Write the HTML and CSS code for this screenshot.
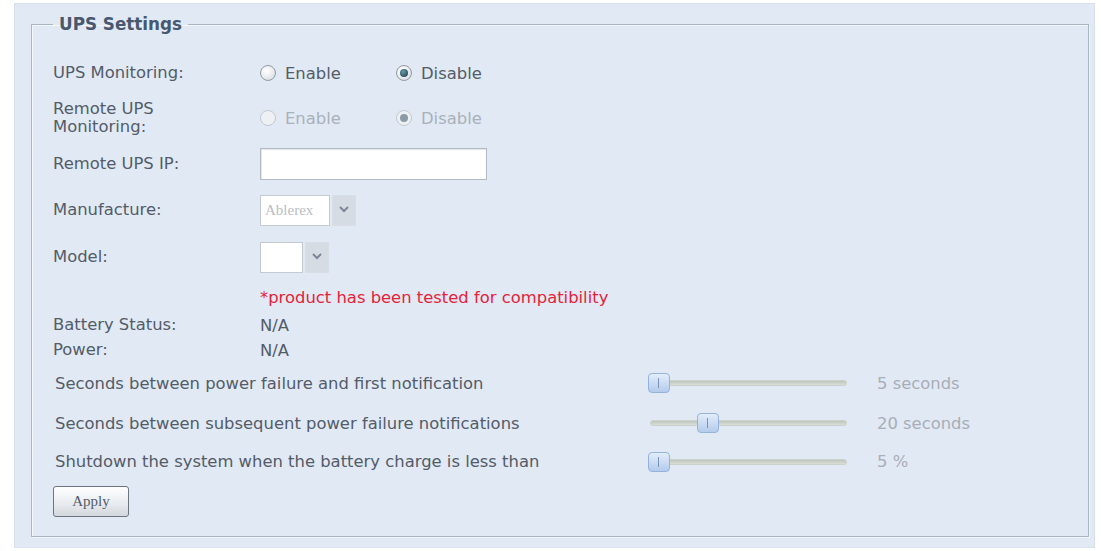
FILE: index.html
```html
<!DOCTYPE html>
<html>
<head>
<meta charset="utf-8">
<link rel="stylesheet" href="styles.css">
</head>
<body>
<div class="panel">
  <fieldset class="box">
    <legend class="legend">UPS Settings</legend>
    <div class="row r1">
      <div class="label">UPS Monitoring:</div>
      <div class="options">
        <span class="opt"><span class="radio"></span>Enable</span>
        <span class="opt"><span class="radio on"></span>Disable</span>
      </div>
    </div>
    <div class="row r2">
      <div class="label">Remote UPS<br>Monitoring:</div>
      <div class="options dis">
        <span class="opt"><span class="radio"></span>Enable</span>
        <span class="opt"><span class="radio on"></span>Disable</span>
      </div>
    </div>
    <div class="row r3">
      <div class="label">Remote UPS IP:</div>
      <div><div class="input"></div></div>
    </div>
    <div class="row r4">
      <div class="label">Manufacture:</div>
      <div class="select">
        <span class="sel-text w70">Ablerex</span>
        <span class="sel-btn"><svg width="12" height="8" viewBox="0 0 12 8"><path d="M2 2 L6 6 L10 2" fill="none" stroke="#7d8796" stroke-width="2"/></svg></span>
      </div>
    </div>
    <div class="row r5">
      <div class="label">Model:</div>
      <div class="select">
        <span class="sel-text w43"></span>
        <span class="sel-btn"><svg width="12" height="8" viewBox="0 0 12 8"><path d="M2 2 L6 6 L10 2" fill="none" stroke="#7d8796" stroke-width="2"/></svg></span>
      </div>
    </div>
    <div class="row r6">
      <div class="label"></div>
      <div class="note">*product has been tested for compatibility</div>
    </div>
    <div class="row r7">
      <div class="label">Battery Status:</div>
      <div class="value">N/A</div>
    </div>
    <div class="row r8">
      <div class="label">Power:</div>
      <div class="value">N/A</div>
    </div>
    <div class="srow s1">
      <div class="slabel">Seconds between power failure and first notification</div>
      <div class="slider"><span class="track"></span><span class="thumb" style="left:0px"></span></div>
      <div class="sval">5 seconds</div>
    </div>
    <div class="srow s2">
      <div class="slabel">Seconds between subsequent power failure notifications</div>
      <div class="slider"><span class="track"></span><span class="thumb" style="left:49px"></span></div>
      <div class="sval">20 seconds</div>
    </div>
    <div class="srow s3">
      <div class="slabel">Shutdown the system when the battery charge is less than</div>
      <div class="slider"><span class="track"></span><span class="thumb" style="left:0px"></span></div>
      <div class="sval">5 %</div>
    </div>
    <div class="actions">
      <button class="btn">Apply</button>
    </div>
  </fieldset>
</div>
</body>
</html>
```

FILE: styles.css
```css
html, body {
  margin: 0;
  padding: 0;
  background: #ffffff;
}
body {
  font-family: "DejaVu Sans", Verdana, sans-serif;
  font-size: 16.4px;
  color: #535c68;
}
.panel {
  margin: 3px 6px 0 14px;
  height: 545px;
  box-sizing: border-box;
  background: #e1e9f4;
  border: 1px solid #d7e0eb;
  padding: 7px 5px 0 16px;
}
.box {
  margin: 0;
  height: 526px;
  box-sizing: border-box;
  border: 1px solid #a9b6c6;
  box-shadow: inset 1px 1px 0 #f3f6fa, 1px 1px 0 #f3f6fa;
  padding: 14px 20px 0 21px;
}
.legend {
  font-weight: bold;
  font-size: 16.8px;
  line-height: 26px;
  color: #48586e;
  padding: 0 6px;
  margin-left: 0;
}
.row {
  display: grid;
  grid-template-columns: 207px 1fr;
  align-items: center;
}
.r1 { height: 44px; }
.r2 { height: 46px; }
.r3 { height: 46px; }
.r4 { height: 46px; }
.r5 { height: 48px; }
.r6 { height: 32px; }
.r7 { height: 24px; }
.r8 { height: 26px; }
.label {
  line-height: 18px;
}
.options {
  display: flex;
}
.opt {
  width: 136px;
  display: flex;
  align-items: center;
  gap: 9px;
}
.radio {
  width: 14px;
  height: 14px;
  border-radius: 50%;
  border: 1px solid #959ca5;
  background: radial-gradient(circle at 40% 35%, #ffffff 0%, #e8ebee 55%, #c9ced4 100%);
  position: relative;
}
.radio.on::after {
  content: "";
  position: absolute;
  left: 3px;
  top: 3px;
  width: 8px;
  height: 8px;
  border-radius: 50%;
  background: radial-gradient(circle at 40% 35%, #6a9aa8 0%, #2d5562 70%);
}
.dis {
  color: #a9b1bb;
}
.dis .radio {
  border-color: #c4c9cf;
  background: #eef1f4;
}
.dis .radio.on::after {
  background: #8a9ba6;
}
.input {
  width: 225px;
  height: 30px;
  background: #ffffff;
  border: 1px solid #b3bac4;
  box-shadow: inset 1px 1px 1px #e2e6ea;
}
.select {
  display: flex;
  gap: 2px;
  height: 31px;
}
.sel-text {
  box-sizing: border-box;
  height: 31px;
  background: #ffffff;
  border: 1px solid #c4cad2;
  font-family: "Liberation Serif", "Times New Roman", serif;
  font-size: 15px;
  color: #b9bec5;
  line-height: 29px;
  padding-left: 4px;
}
.w70 { width: 70px; }
.w43 { width: 43px; }
.sel-btn {
  width: 24px;
  height: 31px;
  box-sizing: border-box;
  background: #d6dce4;
  border: 1px solid #d9dee5;
  display: flex;
  align-items: flex-start;
  justify-content: center;
  padding-top: 9px;
}
.note {
  color: #e5233b;
}
.srow {
  display: grid;
  grid-template-columns: 593px 229px 1fr;
  align-items: center;
  padding-left: 2px;
}
.s1 { height: 40px; }
.s2 { height: 40px; }
.s3 { height: 37px; }
.slider {
  position: relative;
  height: 22px;
  width: 199px;
}
.track {
  position: absolute;
  left: 2px;
  right: 0;
  top: 8px;
  height: 6px;
  border-radius: 3px;
  background: linear-gradient(#bfc6bf, #d9ded5);
  border: 1px solid #cbd1cb;
  box-sizing: border-box;
}
.thumb {
  position: absolute;
  top: 1px;
  width: 22px;
  height: 20px;
  box-sizing: border-box;
  border: 1px solid #94b3da;
  border-radius: 4px;
  background: linear-gradient(#e3edfb, #b4cbeb);
}
.thumb::after {
  content: "";
  position: absolute;
  left: 9px;
  top: 4px;
  width: 1px;
  height: 10px;
  background: #7894b8;
}
.sval {
  color: #a8aeb7;
}
.actions {
  padding-top: 6px;
}
.btn {
  width: 76px;
  height: 31px;
  border: 1px solid #6b7582;
  border-radius: 3px;
  background: linear-gradient(#ffffff, #e9ecf0 55%, #d3d8de);
  font-family: "Liberation Serif", "Times New Roman", serif;
  font-size: 15px;
  color: #535c68;
  padding: 0;
}
```
